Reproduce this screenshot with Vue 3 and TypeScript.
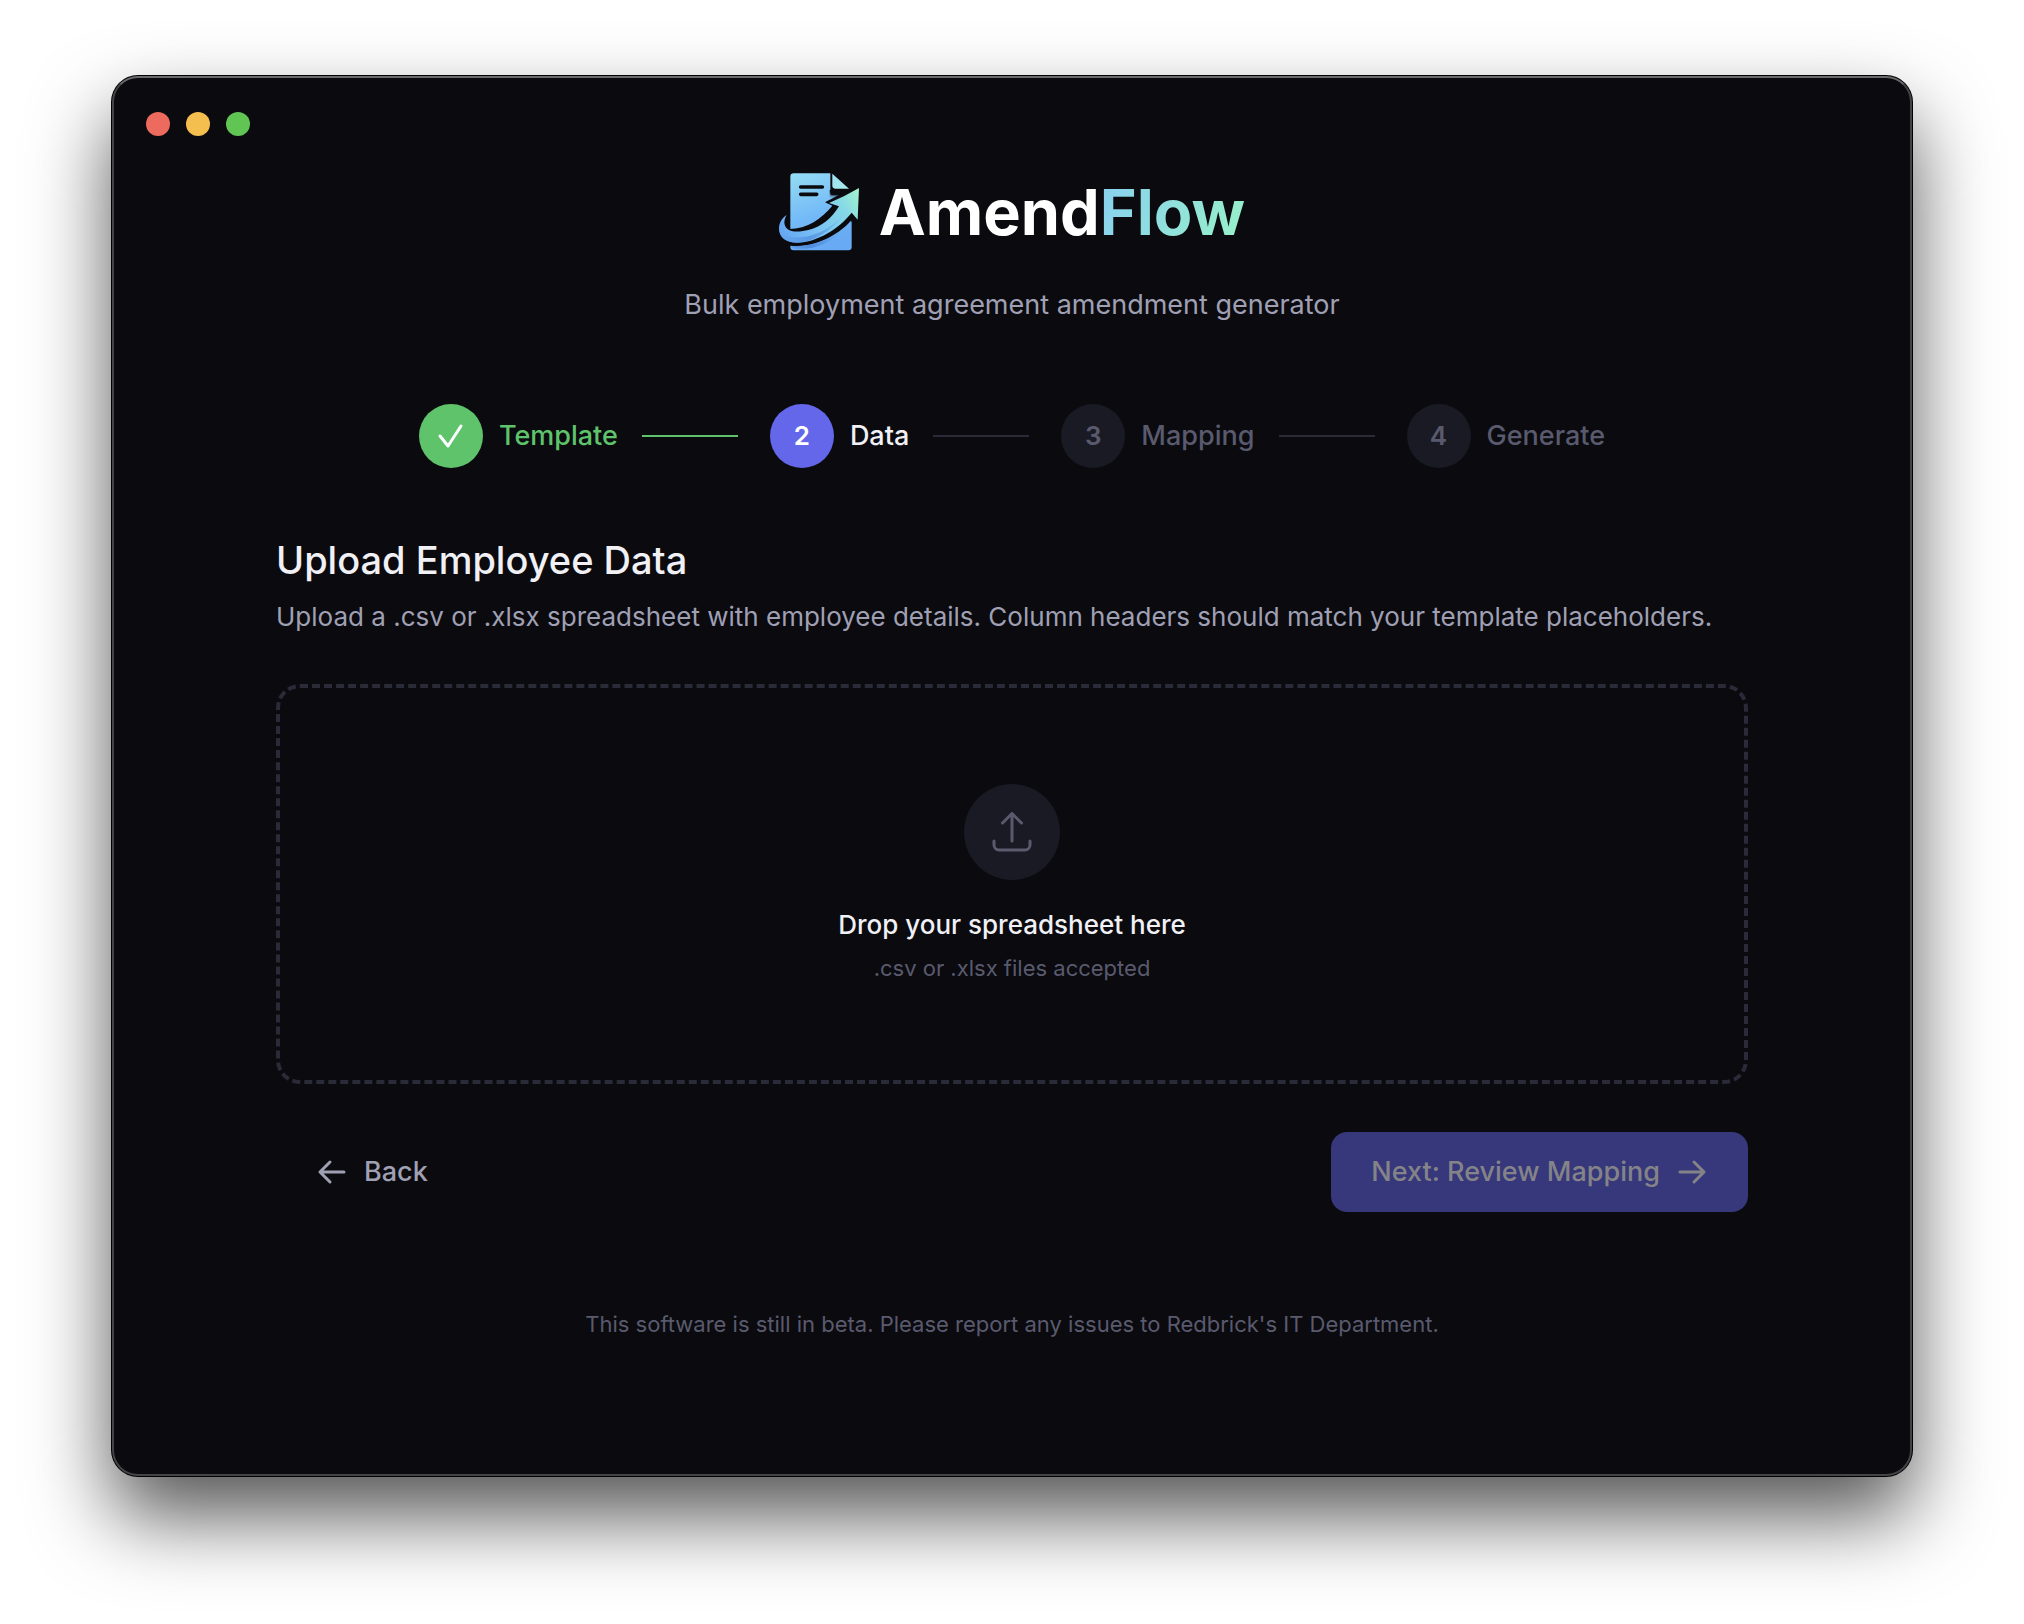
<script setup lang="ts">
import { ref } from 'vue'

interface Step {
  id: number
  label: string
}

const steps: Step[] = [
  { id: 1, label: 'Template' },
  { id: 2, label: 'Data' },
  { id: 3, label: 'Mapping' },
  { id: 4, label: 'Generate' },
]

const current = ref(2)
const file = ref<File | null>(null)

function stateOf(step: Step): string {
  if (step.id < current.value) return 'done'
  return step.id === current.value ? 'active' : 'pending'
}

function onPick(event: Event) {
  file.value = (event.target as HTMLInputElement).files?.[0] ?? null
}
</script>

<template>
  <div class="desktop">
    <div class="window">
      <div class="titlebar">
        <button class="light close" type="button" aria-label="Close"></button>
        <button class="light minimize" type="button" aria-label="Minimize"></button>
        <button class="light zoom" type="button" aria-label="Zoom"></button>
      </div>

      <header class="header">
        <h1 class="brand">
          <svg class="logo" viewBox="54 36 240 240" aria-hidden="true">
            <defs>
              <linearGradient id="page" x1="0" y1="0" x2="0.3" y2="1">
                <stop offset="0" stop-color="#95dcf3" />
                <stop offset="0.6" stop-color="#74baf8" />
                <stop offset="1" stop-color="#68aaf3" />
              </linearGradient>
              <linearGradient id="fold" x1="0" y1="0" x2="1" y2="1">
                <stop offset="0" stop-color="#9be0f2" />
                <stop offset="1" stop-color="#a9ecec" />
              </linearGradient>
              <linearGradient id="shade" x1="0" y1="1" x2="0.25" y2="0">
                <stop offset="0.2" stop-color="#0a0a0f" stop-opacity="0" />
                <stop offset="0.9" stop-color="#0a0a0f" />
              </linearGradient>
              <linearGradient id="arrow" gradientUnits="userSpaceOnUse" x1="60" y1="240" x2="294" y2="90">
                <stop offset="0" stop-color="#64a5f2" />
                <stop offset="0.4" stop-color="#7ac3f4" />
                <stop offset="0.75" stop-color="#86d8e6" />
                <stop offset="1" stop-color="#a4f3cd" />
              </linearGradient>
              <linearGradient id="under" gradientUnits="userSpaceOnUse" x1="60" y1="0" x2="240" y2="0">
                <stop offset="0" stop-color="#6aa9f2" />
                <stop offset="0.5" stop-color="#4a83d8" />
                <stop offset="1" stop-color="#6cb0ee" />
              </linearGradient>
            </defs>
            <path fill="url(#page)" d="M98 40H208V98Q208 106 216 106H272V262Q272 271 262 271H98Q88 271 88 262V50Q88 40 98 40Z" />
            <path fill="url(#shade)" d="M206 90H274V120H206Z" />
            <path fill="url(#fold)" d="M214 41L264 86H224Q214 86 214 77Z" />
            <path stroke="#0a0a0f" stroke-width="11" stroke-linecap="round" d="M119 81H184M119 103H167" />
            <path fill="#0a0a0f" d="M294 84L246 98L192 127L214 137C182 176 140 206 84 207L56 190V246Q90 264 84 257C150 266 226 232 268 184L290 188Z" />
            <path fill="url(#under)" d="M88 257C150 262 206 240 254 200C210 252 160 270 104 266Q92 264 88 257Z" opacity="0.8" />
            <path fill="url(#arrow)" d="M294 84L290 179L272 158C232 208 168 246 110 248C76 249 54 232 54 206C54 190 62 174 77 165C66 184 68 200 84 210C98 217 122 215 142 210C184 200 212 174 234 139L204 129L250 108Z" />
            <path fill="url(#under)" d="M55 200C58 224 84 234 118 232C160 229 208 206 244 170C206 214 160 244 112 248C76 250 52 230 55 200Z" opacity="0.6" />
          </svg>
          <span class="name">Amend<span class="flow">Flow</span></span>
        </h1>
        <p class="tagline">Bulk employment agreement amendment generator</p>
      </header>

      <ol class="steps">
        <li v-for="step in steps" :key="step.id" class="step" :class="stateOf(step)">
          <span class="badge">
            <svg v-if="stateOf(step) === 'done'" class="check" viewBox="0 0 32 32" aria-label="Done">
              <path d="M5 16L13 26L26 6" />
            </svg>
            <template v-else>{{ step.id }}</template>
          </span>
          <span class="label">{{ step.label }}</span>
        </li>
      </ol>

      <main class="content">
        <h2 class="heading">Upload Employee Data</h2>
        <p class="description">
          Upload a .csv or .xlsx spreadsheet with employee details. Column headers should match your template placeholders.
        </p>

        <label class="dropzone">
          <input class="file" type="file" accept=".csv,.xlsx" @change="onPick" />
          <span class="upload">
            <svg viewBox="0 0 40 40" aria-hidden="true">
              <path d="M20 29V2M10.500 11L20 1.500L29.500 11M2 29V33A5 5 0 0 0 7 38H33A5 5 0 0 0 38 33V29" />
            </svg>
          </span>
          <span class="prompt">Drop your spreadsheet here</span>
          <span class="hint">.csv or .xlsx files accepted</span>
        </label>

        <div class="actions">
          <button class="button back" type="button" @click="current = 1">
            <svg viewBox="0 0 32 32" aria-hidden="true"><path d="M28 16H4M14 6L4 16L14 26" /></svg>
            Back
          </button>
          <button class="button next" type="button" :disabled="!file" @click="current = 3">
            Next: Review Mapping
            <svg viewBox="0 0 32 32" aria-hidden="true"><path d="M4 16H28M18 6L28 16L18 26" /></svg>
          </button>
        </div>
      </main>

      <footer class="footer">This software is still in beta. Please report any issues to Redbrick's IT Department.</footer>
    </div>
  </div>
</template>

<style>
body {
  margin: 0;
  background: #fff;
}
</style>

<style scoped>
.desktop {
  box-sizing: border-box;
  display: flex;
  min-height: 100vh;
  padding: 76px 112px 148px;
  overflow: hidden;
  font-family: Inter, "Liberation Sans", sans-serif;
  font-size: 26px;
  line-height: 42px;
  color: #f0f0f5;
}

.window {
  flex: 1;
  min-width: 0;
  box-sizing: border-box;
  border: 2px solid #444447;
  border-top-color: #6a6a6d;
  border-radius: 26px;
  background: #0a0a0f;
  box-shadow: 0 0 0 1px #000, 0 40px 80px rgba(0, 0, 0, 0.67);
}

.titlebar {
  box-sizing: border-box;
  display: flex;
  gap: 16px;
  height: 94px;
  padding: 34px 32px 0;
}

.light {
  width: 24px;
  height: 24px;
  padding: 0;
  border: 0;
  border-radius: 50%;
}

.close { background: #ed6a5e; }
.minimize { background: #f5bf4f; }
.zoom { background: #61c554; }

.header {
  text-align: center;
}

.brand {
  display: flex;
  align-items: center;
  justify-content: center;
  gap: 20px;
  margin: 0;
  font-size: 63px;
  font-weight: 700;
  line-height: 80px;
  color: #fff;
}

.logo {
  width: 80px;
  height: 80px;
}

.flow {
  background: linear-gradient(110deg, #89cff0, #98f2c8);
  background-clip: text;
  -webkit-background-clip: text;
  color: transparent;
}

.tagline {
  margin: 32px 0 0;
  font-size: 27px;
  color: #a0a0b4;
}

.steps {
  display: flex;
  justify-content: center;
  margin: 78px 0 64px;
  padding: 0;
  list-style: none;
}

.step {
  display: flex;
  align-items: center;
  font-size: 27px;
  font-weight: 500;
  color: #5a5a6e;
}

.step:not(:last-child)::after {
  content: "";
  width: 96px;
  height: 2px;
  margin: 0 32px 0 24px;
  background: #2a2a38;
}

.badge {
  display: flex;
  align-items: center;
  justify-content: center;
  width: 64px;
  height: 64px;
  margin-right: 16px;
  border-radius: 50%;
  background: #1a1a24;
  font-size: 26px;
  font-weight: 600;
}

.done { color: #5fc36b; }
.done .badge,
.step.done::after { background: #5fc36b; }
.active { color: #f0f0f5; }
.active .badge { background: #6467e9; color: #fff; }

.check {
  width: 32px;
  height: 32px;
  fill: none;
  stroke: #fff;
  stroke-width: 3;
  stroke-linecap: round;
  stroke-linejoin: round;
}

.content {
  padding: 0 162px;
}

.heading {
  margin: 0 0 8px;
  font-size: 38px;
  font-weight: 500;
  line-height: 56px;
}

.description {
  margin: 0 0 46px;
  color: #a0a0b4;
}

.dropzone {
  display: flex;
  flex-direction: column;
  align-items: center;
  padding: 96px 32px;
  border: 4px dashed #2a2a38;
  border-radius: 24px;
}

.file {
  position: absolute;
  width: 1px;
  height: 1px;
  opacity: 0;
}

.upload {
  display: flex;
  align-items: center;
  justify-content: center;
  width: 96px;
  height: 96px;
  margin-bottom: 24px;
  border-radius: 50%;
  background: #1a1a24;
}

.upload svg {
  width: 40px;
  height: 40px;
  fill: none;
  stroke: #5a5a6e;
  stroke-width: 3;
  stroke-linecap: round;
  stroke-linejoin: round;
}

.prompt {
  font-weight: 500;
}

.hint {
  margin-top: 6px;
  font-size: 22px;
  line-height: 32px;
  color: #5a5a6e;
}

.actions {
  display: flex;
  justify-content: space-between;
  margin-top: 48px;
}

.button {
  display: flex;
  align-items: center;
  gap: 16px;
  height: 80px;
  padding: 0 40px;
  border: 0;
  border-radius: 16px;
  font: inherit;
  font-size: 27px;
  font-weight: 500;
}

.button svg {
  width: 32px;
  height: 32px;
  fill: none;
  stroke: currentColor;
  stroke-width: 3;
  stroke-linecap: round;
  stroke-linejoin: round;
}

.back {
  background: transparent;
  color: #a0a0b4;
}

.next {
  background: #6467e9;
  color: #fff;
}

.next:disabled {
  background: #37377b;
  color: #848488;
}

.footer {
  margin: 96px 0;
  padding: 0 32px;
  font-size: 22px;
  line-height: 32px;
  text-align: center;
  color: #5a5a6e;
}
</style>
